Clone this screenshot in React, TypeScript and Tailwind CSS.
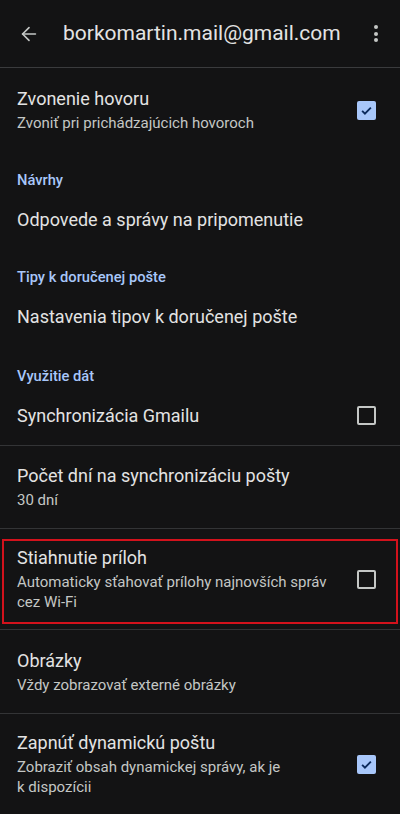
import { ArrowLeft } from "lucide-react";

type RowProps = {
  title: string;
  subtitle?: string;
  checkbox?: "on" | "off";
  className?: string;
};

function Checkbox({ checked }: { checked: boolean }) {
  if (checked) {
    return (
      <div className="flex h-[19px] w-[19px] items-center justify-center rounded-[2px] bg-[#a8c7fa]">
        <svg viewBox="0 0 24 24" className="h-[15px] w-[15px]" fill="none" stroke="#0b2a5c" strokeWidth="3">
          <path d="M5 12.5l4.5 4.5L19 7.5" />
        </svg>
      </div>
    );
  }
  return <div className="h-[19px] w-[19px] rounded-[2px] border-2 border-[#c4c7c5]" />;
}

function Row({ title, subtitle, checkbox, className = "" }: RowProps) {
  return (
    <div className={`flex items-center pl-[17px] pr-[24px] ${className}`}>
      <div className="flex-1 pr-[26px]">
        <div className="text-[18px] leading-6 text-[#e3e3e3]">{title}</div>
        {subtitle && <div className="mt-0.5 text-[15px] leading-5 text-[#c4c7c5]">{subtitle}</div>}
      </div>
      {checkbox && <Checkbox checked={checkbox === "on"} />}
    </div>
  );
}

function Section({ label, className = "" }: { label: string; className?: string }) {
  return <div className={`pl-[17px] text-[14.7px] font-medium leading-5 text-[#a8c7fa] ${className}`}>{label}</div>;
}

const Divider = () => <div className="h-px bg-[#333436]" />;

export default function App() {
  return (
    <main className="min-h-[814px] w-full bg-[#131314]" style={{ fontFamily: "Roboto, 'Noto Sans', sans-serif" }}>
      <header className="flex h-[68px] items-center border-b border-[#3a3b3d] pl-[18px] pr-[22px]">
        <ArrowLeft className="h-[22px] w-[22px] text-[#c4c7c5]" strokeWidth={1.8} />
        <h1 className="ml-[23px] flex-1 text-[21px] text-[#e3e3e3]">borkomartin.mail@gmail.com</h1>
        <div className="flex flex-col gap-[2.5px]">
          <span className="h-[4px] w-[4px] rounded-full bg-[#c4c7c5]" />
          <span className="h-[4px] w-[4px] rounded-full bg-[#c4c7c5]" />
          <span className="h-[4px] w-[4px] rounded-full bg-[#c4c7c5]" />
        </div>
      </header>

      <Row className="h-[84px]" title="Zvonenie hovoru" subtitle="Zvoniť pri prichádzajúcich hovoroch" checkbox="on" />

      <Section className="pt-[18px]" label="Návrhy" />
      <Row className="h-[60px]" title="Odpovede a správy na pripomenutie" />

      <Section className="pt-[17px]" label="Tipy k doručenej pošte" />
      <Row className="h-[60px]" title="Nastavenia tipov k doručenej pošte" />

      <Section className="pt-[19px]" label="Využitie dát" />
      <Row className="h-[59px]" title="Synchronizácia Gmailu" checkbox="off" />
      <Divider />
      <Row className="h-[82px]" title="Počet dní na synchronizáciu pošty" subtitle="30 dní" />
      <Divider />
      <div className="relative">
        <Row className="h-[100px]" title="Stiahnutie príloh" subtitle="Automaticky sťahovať prílohy najnovších správ cez Wi-Fi" checkbox="off" />
        <div className="pointer-events-none absolute inset-x-[2px] top-[10px] bottom-[5px] border-2 border-[#d3121c]" />
      </div>
      <Divider />
      <Row className="h-[83px]" title="Obrázky" subtitle="Vždy zobrazovať externé obrázky" />
      <Divider />
      <Row className="h-[100px]" title="Zapnúť dynamickú poštu" subtitle={"Zobraziť obsah dynamickej správy, ak je k\u00a0dispozícii"} checkbox="on" />
    </main>
  );
}
